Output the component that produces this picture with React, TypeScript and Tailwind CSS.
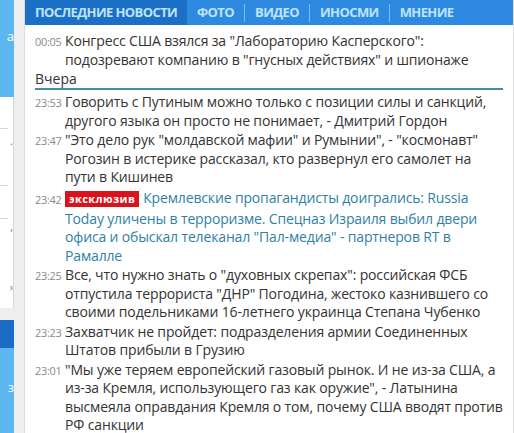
const tabs = ["ФОТО", "ВИДЕО", "ИНОСМИ", "МНЕНИЕ"];

type Item = { time: string; lines: string[]; exclusive?: boolean };

const today: Item[] = [
  {
    time: "00:05",
    lines: [
      "Конгресс США взялся за \"Лабораторию Касперского\":",
      "подозревают компанию в \"гнусных действиях\" и шпионаже",
    ],
  },
];

const yesterday: Item[] = [
  {
    time: "23:53",
    lines: [
      "Говорить с Путиным можно только с позиции силы и санкций,",
      "другого языка он просто не понимает, - Дмитрий Гордон",
    ],
  },
  {
    time: "23:47",
    lines: [
      "\"Это дело рук \"молдавской мафии\" и Румынии\", - \"космонавт\"",
      "Рогозин в истерике рассказал, кто развернул его самолет на",
      "пути в Кишинев",
    ],
  },
  {
    time: "23:42",
    exclusive: true,
    lines: [
      "Кремлевские пропагандисты доигрались: Russia",
      "Today уличены в терроризме. Спецназ Израиля выбил двери",
      "офиса и обыскал телеканал \"Пал-медиа\" - партнеров RT в",
      "Рамалле",
    ],
  },
  {
    time: "23:25",
    lines: [
      "Все, что нужно знать о \"духовных скрепах\": российская ФСБ",
      "отпустила террориста \"ДНР\" Погодина, жестоко казнившего со",
      "своими подельниками 16-летнего украинца Степана Чубенко",
    ],
  },
  {
    time: "23:23",
    lines: [
      "Захватчик не пройдет: подразделения армии Соединенных",
      "Штатов прибыли в Грузию",
    ],
  },
  {
    time: "23:01",
    lines: [
      "\"Мы уже теряем европейский газовый рынок. И не из-за США, а",
      "из-за Кремля, использующего газ как оружие\", - Латынина",
      "высмеяла оправдания Кремля о том, почему США вводят против",
      "РФ санкции",
    ],
  },
];

function NewsRow({ item }: { item: Item }) {
  return (
    <div className="flex pb-[1px]">
      <div
        className={
          "w-[30px] shrink-0 text-[11px] leading-[15px] text-[#8a8a8a] tracking-[-0.3px] " +
          (item.exclusive ? "pt-[4px]" : "pt-[2px]")
        }
      >
        {item.time}
      </div>
      <div
        className={
          "text-[14px] leading-[18.5px] tracking-[-0.15px] whitespace-nowrap " +
          (item.exclusive ? "text-[#2f7fa6]" : "text-[#333333]")
        }
      >
        {item.lines.map((line, i) => (
          <div key={i} className={item.exclusive && i === 0 ? "flex items-center h-[22px]" : ""}>
            {item.exclusive && i === 0 && (
              <span className="mr-[4px] bg-[#d8131c] px-[4px] text-[11px] leading-[16px] font-bold tracking-[0.4px] text-white">
                эксклюзив
              </span>
            )}
            {line}
          </div>
        ))}
      </div>
    </div>
  );
}

export default function App() {
  return (
    <div
      className="flex h-[433px] w-[514px] overflow-hidden bg-[#eeeeee]"
      style={{ fontFamily: '"Open Sans", "Noto Sans", sans-serif' }}
    >
      {/* clipped side column */}
      <div className="flex w-[14px] shrink-0 flex-col">
        <div className="h-[97px] bg-[#5cb6ef] pt-[28px] text-right text-[13px] leading-[16px] text-white">
          а
        </div>
        <div className="flex h-[211px] flex-col border-r border-[#d6d6d6] bg-white text-[11px] text-[#777]">
          <div className="h-[31px]" />
          <div className="h-px w-[8px] bg-[#d8d8d8]" />
          <div className="h-[24px] text-right leading-[24px]">.</div>
          <div className="h-[32px]" />
          <div className="h-px w-[8px] bg-[#d8d8d8]" />
          <div className="h-[32px]" />
          <div className="h-px w-[8px] bg-[#d8d8d8]" />
          <div className="h-[8px] text-right leading-[16px]">,</div>
          <div className="h-[52px]" />
          <div className="text-right leading-[16px]">›</div>
        </div>
        <div className="h-[12px]" />
        <div className="h-[28px] bg-[#1a6dc3]" />
        <div className="flex-1 bg-[#5cb6ef] pt-[30px] text-right text-[13px] text-white">з</div>
      </div>

      <div className="w-[10px] shrink-0" />

      <div className="flex-1 border-l border-r border-[#dcdcdc] bg-white">
        <div className="flex h-[25px] items-center bg-[#2d8ae0] text-[13px] font-bold tracking-[-0.6px] text-[#bfe3ff]">
          <div className="flex h-full w-[162px] items-center bg-[#1b6fc4] pl-[10px]">
            ПОСЛЕДНИЕ НОВОСТИ
          </div>
          {tabs.map((t, i) => (
            <div key={t} className="flex h-full items-center">
              <span className="px-[10px]">{t}</span>
              {i < tabs.length - 1 && <span className="h-[18px] w-px bg-[#7cc0f3]" />}
            </div>
          ))}
        </div>

        <div className="pl-[10px] pr-[10px] pt-[7px]">
          {today.map((it) => (
            <NewsRow key={it.time} item={it} />
          ))}
          <div className="border-b-2 border-[#3f8ea3] text-[14px] leading-[18px] text-[#333]">
            Вчера
          </div>
          <div className="pt-[3px]">
            {yesterday.map((it) => (
              <NewsRow key={it.time} item={it} />
            ))}
          </div>
        </div>
      </div>
    </div>
  );
}
